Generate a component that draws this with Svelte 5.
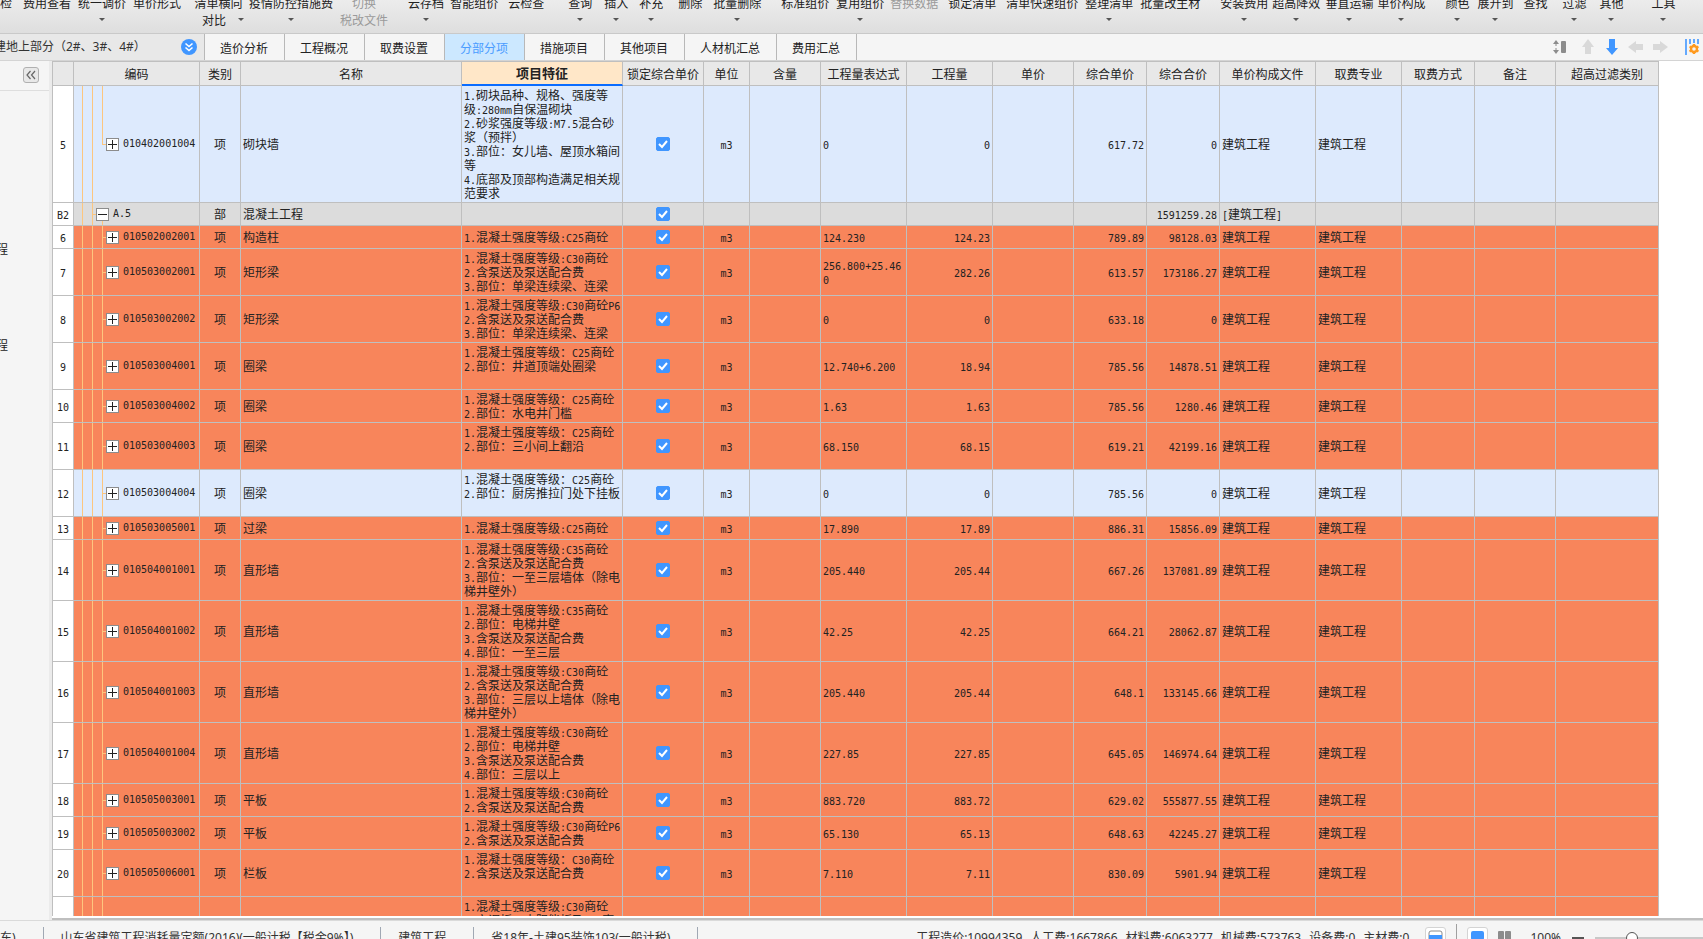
<script>
	const tools = [
		{ text: '检', gap: 0 },
		{ text: '费用查看', gap: 11 },
		{ text: '统一调价', gap: 7, menu: true },
		{ text: '单价形式', gap: 7 },
		{ text: '清单横向', gap: 12, second: '对比', menu: true },
		{ text: '疫情防控措施费', gap: 5, menu: true },
		{ text: '切换', gap: 7, second: '税改文件', disabled: true },
		{ text: '云存档', gap: 20, menu: true },
		{ text: '智能组价', gap: 6 },
		{ text: '云检查', gap: 10 },
		{ text: '查询', gap: 24, menu: true },
		{ text: '插入', gap: 12, menu: true },
		{ text: '补充', gap: 11, menu: true },
		{ text: '删除', gap: 15 },
		{ text: '批量删除', gap: 11, menu: true },
		{ text: '标准组价', gap: 20 },
		{ text: '复用组价', gap: 7, menu: true },
		{ text: '替换数据', gap: 6, disabled: true },
		{ text: '锁定清单', gap: 10 },
		{ text: '清单快速组价', gap: 10 },
		{ text: '整理清单', gap: 7, menu: true },
		{ text: '批量改主材', gap: 7 },
		{ text: '安装费用', gap: 20, menu: true },
		{ text: '超高降效', gap: 4, menu: true },
		{ text: '垂直运输', gap: 5, menu: true },
		{ text: '单价构成', gap: 4, menu: true },
		{ text: '颜色', gap: 20, menu: true },
		{ text: '展开到', gap: 8, menu: true },
		{ text: '查找', gap: 10 },
		{ text: '过滤', gap: 15, menu: true },
		{ text: '其他', gap: 13, menu: true },
		{ text: '工具', gap: 28, menu: true }
	];

	const tabs = ['造价分析', '工程概况', '取费设置', '分部分项', '措施项目', '其他项目', '人材机汇总', '费用汇总'];
	let activeTab = $state('分部分项');

	const columns = [
		{ title: '', width: 22 },
		{ title: '编码', width: 126 },
		{ title: '类别', width: 41 },
		{ title: '名称', width: 221 },
		{ title: '项目特征', width: 161 },
		{ title: '锁定综合单价', width: 81 },
		{ title: '单位', width: 46 },
		{ title: '含量', width: 71 },
		{ title: '工程量表达式', width: 86 },
		{ title: '工程量', width: 86 },
		{ title: '单价', width: 81 },
		{ title: '综合单价', width: 73 },
		{ title: '综合合价', width: 73 },
		{ title: '单价构成文件', width: 96 },
		{ title: '取费专业', width: 86 },
		{ title: '取费方式', width: 73 },
		{ title: '备注', width: 81 },
		{ title: '超高过滤类别', width: 103 }
	];
	const tableWidth = columns.reduce((sum, c) => sum + c.width, 0);

	function item(no, code, name, features, expr, qty, price, total, tone = 'orange') {
		return {
			no, code, name, features, expr, qty, price, total, tone,
			kind: '项', unit: 'm3', file: '建筑工程', major: '建筑工程', locked: true
		};
	}

	let rows = $state([
		{
			...item('5', '010402001004', '砌块墙', [
				'1.砌块品种、规格、强度等', '级:280mm自保温砌块', '2.砂浆强度等级:M7.5混合砂', '浆（预拌）',
				'3.部位：女儿墙、屋顶水箱间', '等', '4.底部及顶部构造满足相关规', '范要求'
			], '0', '0', '617.72', '0', 'blue'),
			last: true
		},
		{
			no: 'B2', code: 'A.5', kind: '部', name: '混凝土工程', features: [''], total: '1591259.28',
			file: '[建筑工程]', tone: 'grey', locked: true, group: true
		},
		item('6', '010502002001', '构造柱', ['1.混凝土强度等级:C25商砼'], '124.230', '124.23', '789.89', '98128.03'),
		item('7', '010503002001', '矩形梁', ['1.混凝土强度等级:C30商砼', '2.含泵送及泵送配合费', '3.部位：单梁连续梁、连梁'], '256.800+25.460', '282.26', '613.57', '173186.27'),
		item('8', '010503002002', '矩形梁', ['1.混凝土强度等级:C30商砼P6', '2.含泵送及泵送配合费', '3.部位：单梁连续梁、连梁'], '0', '0', '633.18', '0'),
		item('9', '010503004001', '圈梁', ['1.混凝土强度等级：C25商砼', '2.部位：井道顶端处圈梁', ''], '12.740+6.200', '18.94', '785.56', '14878.51'),
		item('10', '010503004002', '圈梁', ['1.混凝土强度等级：C25商砼', '2.部位：水电井门槛'], '1.63', '1.63', '785.56', '1280.46'),
		item('11', '010503004003', '圈梁', ['1.混凝土强度等级：C25商砼', '2.部位：三小间上翻沿', ''], '68.150', '68.15', '619.21', '42199.16'),
		item('12', '010503004004', '圈梁', ['1.混凝土强度等级：C25商砼', '2.部位：厨房推拉门处下挂板', ''], '0', '0', '785.56', '0', 'blue'),
		item('13', '010503005001', '过梁', ['1.混凝土强度等级:C25商砼'], '17.890', '17.89', '886.31', '15856.09'),
		item('14', '010504001001', '直形墙', ['1.混凝土强度等级:C35商砼', '2.含泵送及泵送配合费', '3.部位：一至三层墙体（除电', '梯井壁外）'], '205.440', '205.44', '667.26', '137081.89'),
		item('15', '010504001002', '直形墙', ['1.混凝土强度等级:C35商砼', '2.部位：电梯井壁', '3.含泵送及泵送配合费', '4.部位：一至三层'], '42.25', '42.25', '664.21', '28062.87'),
		item('16', '010504001003', '直形墙', ['1.混凝土强度等级:C30商砼', '2.含泵送及泵送配合费', '3.部位：三层以上墙体（除电', '梯井壁外）'], '205.440', '205.44', '648.1', '133145.66'),
		item('17', '010504001004', '直形墙', ['1.混凝土强度等级:C30商砼', '2.部位：电梯井壁', '3.含泵送及泵送配合费', '4.部位：三层以上'], '227.85', '227.85', '645.05', '146974.64'),
		item('18', '010505003001', '平板', ['1.混凝土强度等级:C30商砼', '2.含泵送及泵送配合费'], '883.720', '883.72', '629.02', '555877.55'),
		item('19', '010505003002', '平板', ['1.混凝土强度等级:C30商砼P6', '2.含泵送及泵送配合费'], '65.130', '65.13', '648.63', '42245.27'),
		item('20', '010505006001', '栏板', ['1.混凝土强度等级：C30商砼', '2.含泵送及泵送配合费', ''], '7.110', '7.11', '830.09', '5901.94'),
		{ no: '', features: ['1.混凝土强度等级:C30商砼', '2.空调板、太阳能板及200高', '', ''], tone: 'orange' }
	]);

	const project = ['东)', '山东省建筑工程消耗量定额(2016)(一般计税【税金9%】)', '建筑工程', '省18年-土建95装饰103(一般计税)'];
	const costs = ['工程造价:10994359', '人工费:1667866', '材料费:6063277', '机械费:573763', '设备费:0', '主材费:0'];
	let zoom = $state(32);

	// half-width runs get their own monospaced face
	const runs = (text) => (text ?? '').split(/([\x20-\x7e]+)/).filter(Boolean);
	const isHalf = (run) => run.charCodeAt(0) < 127;
</script>

{#snippet mixed(text)}
	{#each runs(text) as run}{#if isHalf(run)}<span class="half">{run}</span>{:else}{run}{/if}{/each}
{/snippet}

<div class="app">
	<header class="toolbar">
		{#each tools as tool}
			<button type="button" class="tool" class:split={tool.second && tool.menu} disabled={tool.disabled} style="margin-left: {tool.gap}px">
				<span>{tool.text}</span>
				<span class="sub">
					{tool.second ?? ''}
					{#if tool.menu}<i class="caret"></i>{/if}
				</span>
			</button>
		{/each}
	</header>

	<nav class="tabbar">
		<div class="scope">
			<span class="scope-name">建地上部分（2#、3#、4#）</span>
			<button type="button" class="scope-btn" aria-label="展开">
				<svg width="16" height="16" viewBox="0 0 16 16">
					<circle cx="8" cy="8" r="8" fill="#4096ff" />
					<path d="M4.5 4.5 8 7.5l3.5-3M4.5 8.5 8 11.5l3.5-3" fill="none" stroke="#fff" stroke-width="1.6" />
				</svg>
			</button>
		</div>
		{#each tabs as tab}
			<button type="button" class="tab" class:active={activeTab === tab} onclick={() => (activeTab = tab)}>{tab}</button>
		{/each}
		<div class="actions">
			<button type="button" class="first" aria-label="行高">
				<svg width="14" height="14" viewBox="0 0 14 14">
					<path d="M3 0 6 4H0zM3 14l3-4H0z" fill="#8c8c8c" />
					<path d="M3 4v2M3 8v2" stroke="#8c8c8c" />
					<rect x="8" y="1" width="5" height="12" rx="1" fill="#8c8c8c" />
				</svg>
			</button>
			<button type="button" aria-label="上移">
				<svg width="12" height="16" viewBox="0 0 12 16"><path d="M6 0l6 8H9v7H3V8H0z" fill="#d9d9d9" /></svg>
			</button>
			<button type="button" aria-label="下移">
				<svg width="12" height="16" viewBox="0 0 12 16"><path d="M6 16 0 9h3V0h6v9h3z" fill="#4096ff" /></svg>
			</button>
			<button type="button" aria-label="左移">
				<svg width="16" height="12" viewBox="0 0 16 12"><path d="M0 6l8-6v3h7v6H8v3z" fill="#d9d9d9" /></svg>
			</button>
			<button type="button" aria-label="右移">
				<svg width="16" height="12" viewBox="0 0 16 12"><path d="M16 6 8 0v3H1v6h7v3z" fill="#d9d9d9" /></svg>
			</button>
			<button type="button" class="last" aria-label="列设置">
				<svg width="14" height="16" viewBox="0 0 14 16">
					<path d="M1 0v16M5 0v5M9 0v4M13 0v5" stroke="#4096ff" stroke-width="1.6" />
					<circle cx="9" cy="10" r="3" fill="none" stroke="#ff9a1f" stroke-width="2.4" />
					<path d="M9 5v2M9 13v2M4.600 7.500l1.800 1M11.700 11.500l1.800 1M13.400 7.500l-1.800 1M6.300 11.500l-1.800 1" stroke="#ff9a1f" stroke-width="2.4" />
				</svg>
			</button>
		</div>
	</nav>

	<main class="main">
		<aside class="side">
			<div class="side-head">
				<button type="button" class="collapse" aria-label="收起">
					<svg width="12" height="10" viewBox="0 0 12 10"><path d="M5.500 1 2 5l3.500 4M10 1 6.500 5 10 9" fill="none" stroke="#666" stroke-width="1.2" /></svg>
				</button>
			</div>
			<ul class="side-list">
				<li>程</li>
				<li>程</li>
			</ul>
		</aside>

		<div class="pane">
			<div class="grid">
				<table style="width: {tableWidth}px">
					<colgroup>
						{#each columns as col}<col style="width: {col.width}px" />{/each}
					</colgroup>
					<thead>
						<tr>
							{#each columns as col}<th class:current={col.title === '项目特征'}>{col.title}</th>{/each}
						</tr>
					</thead>
					<tbody>
						{#each rows as row}
							<tr class={row.tone}>
								<td class="no">{@render mixed(row.no)}</td>
								<td class="tree" class:group={row.group} class:end={row.last}>
									{#if row.code}
										<div class="node">
											<button type="button" class="toggle" aria-label="展开 {row.code}">
												<svg width="11" height="11" viewBox="0 0 11 11">
													<path d={row.group ? 'M1 5.500h9' : 'M1 5.500h9M5.500 1v9'} stroke="#222" />
												</svg>
											</button>
											{@render mixed(row.code)}
										</div>
									{/if}
								</td>
								<td class="center">{row.kind ?? ''}</td>
								<td>{row.name ?? ''}</td>
								<td class="features">
									{#each row.features as line}<div>{@render mixed(line)}</div>{/each}
								</td>
								<td class="center">
									{#if row.locked !== undefined}
										<input type="checkbox" aria-label="锁定综合单价 {row.code}" bind:checked={row.locked} />
									{/if}
								</td>
								<td class="center">{@render mixed(row.unit)}</td>
								<td></td>
								<td class="expr">{@render mixed(row.expr)}</td>
								<td class="num">{@render mixed(row.qty)}</td>
								<td></td>
								<td class="num">{@render mixed(row.price)}</td>
								<td class="num">{@render mixed(row.total)}</td>
								<td>{@render mixed(row.file)}</td>
								<td>{row.major ?? ''}</td>
								<td></td>
								<td></td>
								<td></td>
							</tr>
						{/each}
					</tbody>
				</table>
			</div>
		</div>
	</main>

	<footer class="status">
		<div class="status-row">
			{#each project as text}<span class="seg">{text}</span>{/each}
			<div class="costs">
				{#each costs as cost}<span>{cost}</span>{/each}
			</div>
			<button type="button" class="view boxed" aria-label="分栏">
				<svg width="15" height="16" viewBox="0 0 15 16">
					<rect x="1" y="1" width="13" height="14" rx="2" fill="#fff" stroke="#8c8c8c" />
					<path d="M1 5h13v9H1z" fill="#4096ff" />
				</svg>
			</button>
			<span class="bar"></span>
			<button type="button" class="view boxed" aria-label="单页">
				<svg width="13" height="16" viewBox="0 0 13 16"><rect y="1" width="13" height="9" rx="2" fill="#4096ff" /><rect x="2" y="11" width="9" height="4" fill="#4096ff" /></svg>
			</button>
			<button type="button" class="view" aria-label="双页">
				<svg width="13" height="16" viewBox="0 0 13 16"><rect y="1" width="6" height="14" rx="1" fill="#8c8c8c" /><rect x="7" y="1" width="6" height="14" rx="1" fill="#8c8c8c" /></svg>
			</button>
			<span class="percent">100%</span>
			<button type="button" class="minus" aria-label="缩小"></button>
			<input class="zoom" type="range" min="0" max="100" aria-label="缩放" bind:value={zoom} />
		</div>
	</footer>
</div>

<style>
	:global(body) { margin: 0; overflow: hidden; }

	.app {
		height: 100vh;
		display: flex; flex-direction: column;
		background: #fff;
		font-family: 'Noto Sans CJK SC', sans-serif;
		font-size: 12px;
		color: #222;
		overflow: hidden;
	}
	button {
		padding: 0; border: none; background: none;
		font: inherit; color: inherit;
		cursor: pointer;
	}
	svg { display: block; }

	.toolbar {
		flex: 0 0 33px;
		display: flex; align-items: flex-end;
		border-bottom: 1px solid #c9c9c9;
		background: linear-gradient(180deg, #ececec 0%, #dedede 100%);
		overflow: hidden;
	}
	.tool {
		flex: none;
		display: flex; flex-direction: column; align-items: center;
		padding-bottom: 5px;
		line-height: 17px;
		white-space: nowrap;
	}
	.tool:disabled { color: #9a9a9a; }
	.sub { height: 17px; display: flex; align-items: center; gap: 12px; }
	.split .sub { align-self: flex-start; padding-left: 9px; }
	.caret {
		border: 3px solid transparent;
		border-top-color: #555;
		border-bottom: none;
	}

	.tabbar {
		flex: 0 0 26px;
		display: flex;
		border-bottom: 1px solid #d4d4d4;
		background: #f5f5f5;
	}
	.scope {
		box-sizing: border-box;
		width: 205px;
		display: flex; align-items: center; justify-content: space-between;
		padding-right: 7px;
		border-right: 1px solid #b8b8b8;
		background: #e8e8e8;
		color: #333;
		overflow: hidden;
	}
	.scope-name {
		margin-left: -6px;
		font-family: 'Noto Sans', 'Noto Sans CJK SC', sans-serif;
		line-height: 18px;
		white-space: nowrap;
	}
	.tab {
		padding: 0 16px 0 15px;
		border-right: 1px solid #b8b8b8;
		white-space: nowrap;
	}
	.tab.active { background: #cce8ff; color: #4a9cff; }
	.actions { display: flex; align-items: center; margin-left: auto; }
	.actions button { width: 24px; display: flex; justify-content: center; }
	.actions .first { margin-right: 4px; }
	.actions .last { width: 22px; margin-left: 9px; }

	.main { flex: 1; min-height: 0; display: flex; }
	.side {
		flex: 0 0 49px;
		border-right: 3px solid #ebebeb;
		background: #f5f5f5;
		overflow: hidden;
	}
	.side-head {
		box-sizing: border-box;
		height: 30px;
		padding: 6px 10px 0 0;
		border-bottom: 1px solid #dedede;
	}
	.collapse {
		width: 16px; height: 16px;
		display: flex; align-items: center; justify-content: center;
		margin-left: auto;
		border: 1px solid #b0b0b0;
		border-radius: 3px;
		background: #e8e8e8;
	}
	.side-list {
		list-style: none;
		margin: 110px 0 0 -4px; padding: 0;
	}
	.side-list li { height: 96px; line-height: 96px; }

	.pane {
		flex: 1; min-width: 0;
		display: flex; flex-direction: column;
		padding-bottom: 2px;
		border-bottom: 2px solid #bfbfbf;
	}
	.grid { flex: 1; min-height: 0; overflow: hidden; }
	table {
		table-layout: fixed;
		border-collapse: separate;
		border-spacing: 0;
	}
	th, td {
		box-sizing: border-box;
		padding: 2px;
		border-right: 1px solid #bfbfbf;
		border-bottom: 1px solid #bfbfbf;
		line-height: 14px;
		text-align: left;
		vertical-align: middle;
		white-space: nowrap;
	}
	th {
		height: 25px;
		padding: 0;
		border-top: 1px solid #bfbfbf;
		background: #e8e8e8;
		font-weight: 400;
		text-align: center;
	}
	th:first-child, td:first-child { border-left: 1px solid #bfbfbf; }
	th.current {
		border-bottom: 2px solid #0a6cff;
		background: #ffe7c8;
		font-size: 13px; font-weight: 700;
	}
	td { height: 23px; }
	.orange { background: #f8855b; }
	.blue { background: #ddeafd; }
	.grey { background: #dcdcdc; }
	td.no { padding: 0; background: #fff; text-align: center; }
	.center { text-align: center; }
	.num { text-align: right; }
	.expr { white-space: normal; word-break: break-all; }
	.features { padding-right: 0; }
	.features div { height: 14px; }
	.half {
		font-family: 'DejaVu Sans Mono', monospace;
		font-size: 10px;
		line-height: 1;
	}

	/* guide lines of the outline tree, with a tick to the node's box */
	.tree {
		--guide: linear-gradient(#fdc67e, #fdc67e);
		padding: 0 0 0 32px;
		background-image: var(--guide), var(--guide), var(--guide), var(--guide);
		background-repeat: no-repeat;
		background-size: 1px 100%, 1px 100%, 1px 100%, 4px 1px;
		background-position: 8px 0, 18px 0, 28px 0, 28px 50%;
	}
	.tree.end { background-size: 1px 100%, 1px 100%, 1px 50%, 4px 1px; }
	.tree.group {
		padding-left: 22px;
		background-size: 1px 100%, 1px 100%, 1px 50%, 4px 1px;
		background-position: 8px 0, 18px 0, 28px 100%, 18px 50%;
	}
	.node { display: flex; align-items: center; gap: 4px; }
	.toggle { flex: none; border: 1px solid #8c8c8c; background: #fff; }

	input[type='checkbox'] {
		appearance: none;
		display: block;
		width: 14px; height: 14px;
		margin: 0 auto;
		border: 1px solid #4096ff;
		border-radius: 2px;
		background: #fff;
	}
	input[type='checkbox']:checked {
		background: #4096ff url("data:image/svg+xml,%3Csvg xmlns='http://www.w3.org/2000/svg' viewBox='0 0 12 12'%3E%3Cpath d='M2 6l3 3 5-6' fill='none' stroke='white' stroke-width='2'/%3E%3C/svg%3E") center / 12px 12px no-repeat;
	}

	.status {
		flex: 0 0 18px;
		border-top: 1px solid #dadada;
		background: #f5f5f5;
		color: #333;
		font-family: 'Noto Sans', 'Noto Sans CJK SC', sans-serif;
		overflow: hidden;
	}
	.status-row {
		height: 33px;
		display: flex; align-items: center;
		white-space: nowrap;
	}
	.seg {
		padding: 0 27px 0 17px;
		line-height: 21px;
		border-right: 1px solid #a0a8b4;
	}
	.seg:first-child { padding-left: 0; }
	.costs { display: flex; gap: 8px; margin-left: auto; line-height: 21px; }
	.view {
		width: 21px; height: 21px;
		display: flex; align-items: center; justify-content: center;
		margin-left: 6px;
	}
	.boxed {
		box-sizing: border-box;
		margin-left: 10px;
		border: 1px solid #d4d4d4;
		border-radius: 3px;
		background: #fff;
	}
	.costs + .boxed { margin-left: 16px; }
	.bar { width: 1px; height: 28px; margin-left: 10px; background: #a0a0a0; }
	.percent { margin-left: 15px; line-height: 21px; }
	.minus { width: 12px; height: 2px; margin: 0 11px; background: #555; }
	.zoom {
		appearance: none;
		width: 108px; height: 12px;
		margin: 0;
		background: linear-gradient(#c8c8c8, #c8c8c8) center / 100% 2px no-repeat;
	}
	.zoom::-webkit-slider-thumb {
		appearance: none;
		box-sizing: border-box;
		width: 12px; height: 12px;
		border: 1px solid #555;
		border-radius: 50%;
		background: #fff;
	}
</style>
